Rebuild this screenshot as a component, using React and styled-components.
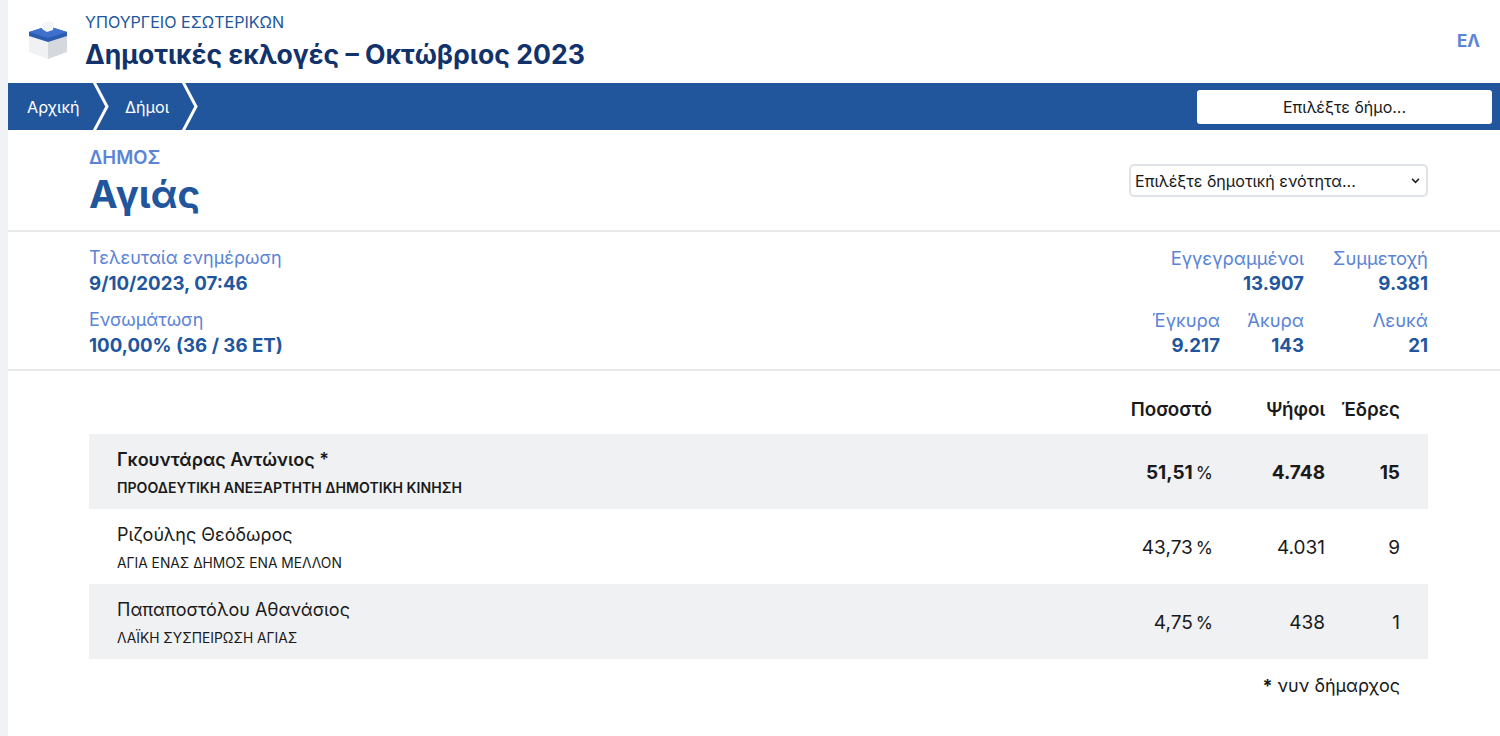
import React from "react";
import styled, { createGlobalStyle } from "styled-components";

const Global = createGlobalStyle`
  html, body { margin: 0; padding: 0; background: #f0f2f5; }
  body { font-family: Inter, "Noto Sans", sans-serif; color: #1a1a1a; height: 736px; overflow: hidden; }
`;
const Page = styled.div`
  margin-left: 8px; background: #fff; height: 736px; display: flex; flex-direction: column;
`;
const Header = styled.header`
  height: 83px; box-sizing: border-box; display: flex; align-items: flex-start; padding: 0 20px 0 20px;
`;
const Logo = styled.svg`
  width: 40px; height: 40px; margin-top: 19px; flex: none;
`;
const Titles = styled.div`
  margin-left: 17px; padding-top: 13px; flex: 1;
`;
const Ministry = styled.div`
  font-size: 16.1px; line-height: 19px; color: #22569c;
`;
const Title = styled.h1`
  margin: 4px 0 0; font-size: 26.6px; line-height: 36px; font-weight: 700; color: #12326b;
`;
const Lang = styled.div`
  margin-top: 31px; font-size: 17px; line-height: 20px; font-weight: 700; color: #5b84d6;
`;
const Nav = styled.nav`
  height: 47px; background: #22569c; display: flex; align-items: center; justify-content: space-between; padding-right: 8px;
`;
const Crumbs = styled.div`
  display: flex; align-items: center; height: 100%;
`;
const Crumb = styled.a`
  font-size: 16.2px; color: #fff; display: block; padding-left: ${p => p.$pad}px; width: ${p => p.$w}px; box-sizing: border-box;
`;
const Chevron = styled.svg`
  width: 16px; height: 47px; flex: none; display: block;
`;
const DemoSearch = styled.button`
  width: 295px; height: 34px; background: #fff; border: 0; border-radius: 3px; font: 16px Inter, sans-serif; color: #1a1a1a; padding: 0;
`;
const Section = styled.section`
  border-bottom: 2px solid #e8e9eb; display: flex; justify-content: space-between;
`;
const Hero = styled(Section)`
  height: 102px; box-sizing: border-box; padding: 17px 72px 0 81px;
`;
const Kicker = styled.div`
  font-size: 18.5px; line-height: 20px; font-weight: 600; color: #5b84d6;
`;
const Name = styled.h2`
  margin: 2px 0 0; font-size: 38.5px; line-height: 50px; font-weight: 700; color: #22569c;
`;
const UnitSelect = styled.div`
  width: 299px; height: 33px; box-sizing: border-box; margin-top: 17px; border: 2px solid #dfe3e8; border-radius: 5px; display: flex; align-items: center; justify-content: space-between; padding: 0 6px 0 4px; font-size: 16.1px; color: #1a1a1a;
`;
const Stats = styled(Section)`
  height: 139px; box-sizing: border-box; padding: 13px 72px 0 81px;
`;
const Col = styled.div`
  display: flex; flex-direction: column; gap: 10px;
`;
const StatRow = styled.div`
  display: flex; justify-content: flex-end;
`;
const Stat = styled.div`
  text-align: ${p => p.$right ? "right" : "left"}; width: ${p => p.$w ? `${p.$w}px` : "auto"};
`;
const StatLabel = styled.div`
  font-size: ${p => p.$wide ? 18.4 : 18}px; line-height: 26px; color: #5b84d6;
`;
const StatValue = styled.div`
  font-size: 18.7px; line-height: 26px; font-weight: 700; color: #22569c;
`;
const Results = styled.div`
  padding: 24px 72px 0 81px; display: flex; flex-direction: column;
`;
const Grid = styled.div`
  display: grid; grid-template-columns: 1fr 110px 113px 75px; padding: 0 28px; align-items: center; box-sizing: border-box;
`;
const HeadRow = styled(Grid)`
  height: 39px; align-items: flex-start; line-height: 30px; font-weight: 600; color: #1a1a1a;
`;
const Row = styled(Grid)`
  height: 75px; background: ${p => p.$shaded ? "#f0f1f3" : "#fff"}; font-weight: ${p => p.$bold ? 700 : 400};
`;
const Cell = styled.div`
  text-align: right;
`;
const HeadCell = styled(Cell)`
  font-size: 18.8px;
`;
const NumCell = styled(Cell)`
  font-size: 19px; padding-top: 1px;
`;
const Pct = styled.span`
  font-size: 17.5px; font-weight: 400; margin-left: 3px; margin-right: -1px;
`;
const Person = styled.div`
  padding-top: 1px;
`;
const Candidate = styled.div`
  font-size: 18px; line-height: 24px; font-weight: ${p => p.$bold ? 600 : 400};
`;
const Party = styled.div`
  font-size: ${p => p.$bold ? 14.1 : 13.8}px; line-height: 16px; margin-top: 8px; font-weight: ${p => p.$bold ? 600 : 400};
`;
const Note = styled.div`
  text-align: right; font-size: 18px; line-height: 24px; padding: 15px 28px 0 0;
`;

const rows = [
  { n: "Γκουντάρας Αντώνιος *", p: "ΠΡΟΟΔΕΥΤΙΚΗ ΑΝΕΞΑΡΤΗΤΗ ΔΗΜΟΤΙΚΗ ΚΙΝΗΣΗ", a: "51,51", v: "4.748", s: "15", shaded: true, bold: true },
  { n: "Ριζούλης Θεόδωρος", p: "ΑΓΙΑ ΕΝΑΣ ΔΗΜΟΣ ΕΝΑ ΜΕΛΛΟΝ", a: "43,73", v: "4.031", s: "9" },
  { n: "Παπαποστόλου Αθανάσιος", p: "ΛΑΪΚΗ ΣΥΣΠΕΙΡΩΣΗ ΑΓΙΑΣ", a: "4,75", v: "438", s: "1", shaded: true },
];

const Chev = () => (
  <Chevron viewBox="0 0 16 47">
    <path d="M1 -1 L14 23.5 L1 48" fill="none" stroke="#fff" strokeWidth="3" />
  </Chevron>
);

export default function App() {
  return (
    <>
      <Global />
      <Page>
        <Header>
          <Logo viewBox="0 0 40 40">
            <path d="M1 15 L20 21 L20 40 L1 33 Z" fill="#eff1f3" />
            <path d="M39 15 L20 21 L20 40 L39 33 Z" fill="#d5d8dc" />
            <path d="M20 7 L39 13 L39 17 L20 23 L1 17 L1 13 Z" fill="#2a5cb0" />
            <path d="M20 7 L39 13 L20 19 L1 13 Z" fill="#3f70cc" />
            <path d="M14 5 L21 2 L26 4 L25 11 L19 13 L14 10 Z" fill="#f4f5f7" />
          </Logo>
          <Titles>
            <Ministry>ΥΠΟΥΡΓΕΙΟ ΕΣΩΤΕΡΙΚΩΝ</Ministry>
            <Title>Δημοτικές εκλογές – Οκτώβριος 2023</Title>
          </Titles>
          <Lang>ΕΛ</Lang>
        </Header>
        <Nav>
          <Crumbs>
            <Crumb $pad={19} $w={85}>Αρχική</Crumb>
            <Chev />
            <Crumb $pad={16} $w={73}>Δήμοι</Crumb>
            <Chev />
          </Crumbs>
          <DemoSearch>Επιλέξτε δήμο...</DemoSearch>
        </Nav>
        <Hero>
          <div>
            <Kicker>ΔΗΜΟΣ</Kicker>
            <Name>Αγιάς</Name>
          </div>
          <UnitSelect>
            <span>Επιλέξτε δημοτική ενότητα...</span>
            <svg width="9" height="6" viewBox="0 0 10 7"><path d="M1 1 L5 5 L9 1" fill="none" stroke="#222" strokeWidth="1.8" /></svg>
          </UnitSelect>
        </Hero>
        <Stats>
          <Col>
            <Stat><StatLabel>Τελευταία ενημέρωση</StatLabel><StatValue>9/10/2023, 07:46</StatValue></Stat>
            <Stat><StatLabel>Ενσωμάτωση</StatLabel><StatValue>100,00% (36 / 36 ΕΤ)</StatValue></Stat>
          </Col>
          <Col>
            <StatRow>
              <Stat $right><StatLabel $wide>Εγγεγραμμένοι</StatLabel><StatValue>13.907</StatValue></Stat>
              <Stat $right $w={124}><StatLabel $wide>Συμμετοχή</StatLabel><StatValue>9.381</StatValue></Stat>
            </StatRow>
            <StatRow>
              <Stat $right><StatLabel $wide>Έγκυρα</StatLabel><StatValue>9.217</StatValue></Stat>
              <Stat $right $w={84}><StatLabel $wide>Άκυρα</StatLabel><StatValue>143</StatValue></Stat>
              <Stat $right $w={124}><StatLabel $wide>Λευκά</StatLabel><StatValue>21</StatValue></Stat>
            </StatRow>
          </Col>
        </Stats>
        <Results>
          <HeadRow>
            <span />
            <HeadCell>Ποσοστό</HeadCell>
            <HeadCell>Ψήφοι</HeadCell>
            <HeadCell>Έδρες</HeadCell>
          </HeadRow>
          {rows.map(r => (
            <Row key={r.n} $shaded={r.shaded} $bold={r.bold}>
              <Person>
                <Candidate $bold={r.bold}>{r.n}</Candidate>
                <Party $bold={r.bold}>{r.p}</Party>
              </Person>
              <NumCell>{r.a}<Pct>%</Pct></NumCell>
              <NumCell>{r.v}</NumCell>
              <NumCell>{r.s}</NumCell>
            </Row>
          ))}
          <Note><b>*</b> νυν δήμαρχος</Note>
        </Results>
      </Page>
    </>
  );
}
